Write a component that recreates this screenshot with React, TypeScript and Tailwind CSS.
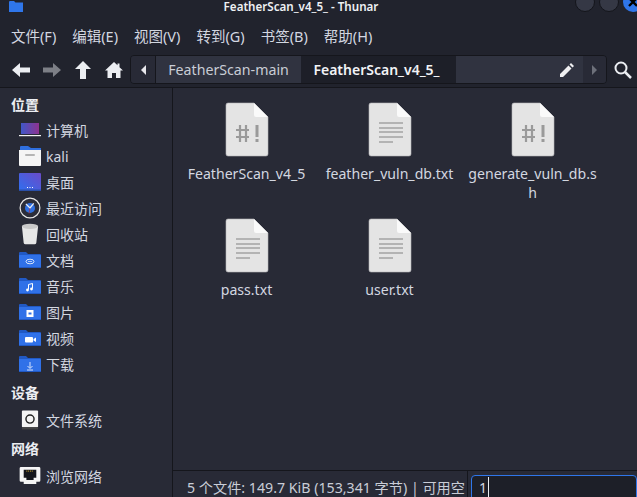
import React from 'react';

const Folder = ({ children }: { children?: React.ReactNode }) => (
  <svg width="22" height="16" viewBox="0 0 22 16">
    <path d="M0 1a1 1 0 0 1 1-1h6l2 2h12a1 1 0 0 1 1 1v2H0z" fill="#2159c4" />
    <rect x="0" y="3" width="22" height="13" rx="0.500" fill="#3071e8" />
    <rect x="0" y="15" width="22" height="1" fill="#2159c4" />
    {children}
  </svg>
);

const ScriptFile = () => (
  <svg width="44" height="55" viewBox="0 0 44 55">
    <path d="M3 1h26l14 14v37a2 2 0 0 1-2 2H3a2 2 0 0 1-2-2V3a2 2 0 0 1 2-2z" fill="#e4e4e4" stroke="#b5b5b8" strokeWidth="0.6" />
    <path d="M29 1l14 14H31a2 2 0 0 1-2-2z" fill="#fafafa" />
    <g stroke="#9a9a9a" strokeWidth="2.2" fill="none">
      <path d="M15 23v17M21 23v17M11 28h13M11 35h13" />
      <path d="M32 23v12M32 37v3" strokeWidth="3" />
    </g>
  </svg>
);

const TextFile = () => (
  <svg width="44" height="55" viewBox="0 0 44 55">
    <path d="M3 1h26l14 14v37a2 2 0 0 1-2 2H3a2 2 0 0 1-2-2V3a2 2 0 0 1 2-2z" fill="#e4e4e4" stroke="#b5b5b8" strokeWidth="0.6" />
    <path d="M29 1l14 14H31a2 2 0 0 1-2-2z" fill="#fafafa" />
    <path d="M11 21h24M11 26h24M11 30h24M11 35h24M11 40h14" stroke="#a2a2a2" strokeWidth="1.3" />
  </svg>
);

const places = [
  {
    label: '计算机',
    icon: (
      <svg width="22" height="14" viewBox="0 0 22 14">
        <defs>
          <linearGradient id="lap" x1="0" x2="1">
            <stop offset="0" stopColor="#3f57c8" />
            <stop offset="1" stopColor="#8e3390" />
          </linearGradient>
        </defs>
        <rect x="2" y="0" width="18" height="11" fill="url(#lap)" />
        <rect x="0" y="12" width="22" height="1.200" fill="#f2f2f2" />
      </svg>
    ),
  },
  {
    label: 'kali',
    icon: (
      <svg width="22" height="20" viewBox="0 0 22 20">
        <path d="M1 1a1 1 0 0 1 1-1h7l3 2h10v5H1z" fill="#2f6fe0" />
        <path d="M0 4h22v15a1 1 0 0 1-1 1H1a1 1 0 0 1-1-1z" fill="#f5f5f5" />
        <rect x="6" y="8" width="10" height="2" rx="1" fill="#b5b5b5" />
      </svg>
    ),
  },
  {
    label: '桌面',
    icon: (
      <svg width="22" height="18" viewBox="0 0 22 18">
        <defs>
          <linearGradient id="desk" x1="0" x2="1" y1="1" y2="0">
            <stop offset="0" stopColor="#2f6ff0" />
            <stop offset="1" stopColor="#6a4bc8" />
          </linearGradient>
        </defs>
        <rect x="0" y="0" width="22" height="18" rx="1" fill="url(#desk)" />
        <rect x="0" y="16.500" width="22" height="1.500" fill="#2a4fa8" />
        <path d="M8 14.500h1M10.500 14.500h1M13 14.500h1" stroke="#fff" strokeWidth="1" />
      </svg>
    ),
  },
  {
    label: '最近访问',
    icon: (
      <svg width="22" height="22" viewBox="0 0 24 24">
        <circle cx="12" cy="12" r="10.800" fill="#2b2d3a" stroke="#e6e6e6" strokeWidth="1.300" />
        <circle cx="12" cy="12" r="5.500" fill="#2f6fe0" />
        <path d="M7.500 7.500L12 12l4-5" stroke="#e8ecf5" strokeWidth="1.400" fill="none" />
        <path d="M12 12l-1 6" stroke="#b03040" strokeWidth="0.800" />
      </svg>
    ),
  },
  {
    label: '回收站',
    icon: (
      <svg width="18" height="22" viewBox="0 0 20 24">
        <path d="M1 3.500h18l-2 18.500a2 2 0 0 1-2 1.500H5a2 2 0 0 1-2-1.500z" fill="#e6e6e6" />
        <ellipse cx="10" cy="3.500" rx="9" ry="3" fill="#c9c9c9" />
      </svg>
    ),
  },
  {
    label: '文档',
    icon: (
      <Folder>
        <ellipse cx="11" cy="9.500" rx="4" ry="2.300" fill="none" stroke="#d5e2fb" strokeWidth="1" />
        <path d="M9 9.500h4" stroke="#d5e2fb" strokeWidth="0.800" />
      </Folder>
    ),
  },
  {
    label: '音乐',
    icon: (
      <Folder>
        <path d="M9.500 11.500V6.500l4-1V10.500" fill="none" stroke="#fff" strokeWidth="1" />
        <circle cx="8.500" cy="12" r="1.400" fill="#fff" />
        <circle cx="12.500" cy="11" r="1.400" fill="#fff" />
      </Folder>
    ),
  },
  {
    label: '图片',
    icon: (
      <Folder>
        <rect x="7.500" y="6" width="7" height="7" fill="#fff" />
        <rect x="9.500" y="8.500" width="3" height="2" fill="#3071e8" />
      </Folder>
    ),
  },
  {
    label: '视频',
    icon: (
      <Folder>
        <rect x="6" y="7" width="8" height="5.500" rx="1" fill="#fff" />
        <path d="M14.500 9l2.500-1.500v4.500L14.500 10.500z" fill="#fff" />
      </Folder>
    ),
  },
  {
    label: '下载',
    icon: (
      <Folder>
        <path d="M11 6v6M8.500 10l2.500 2.500 2.500-2.500M8 14h6" fill="none" stroke="#d5e2fb" strokeWidth="1" />
      </Folder>
    ),
  },
];

const files = [
  { name: 'FeatherScan_v4_5', script: true },
  { name: 'feather_vuln_db.txt', script: false },
  { name: 'generate_vuln_db.s h', script: true },
  { name: 'pass.txt', script: false },
  { name: 'user.txt', script: false },
];

const SideRow = ({ icon, label }: { icon: React.ReactNode; label: string }) => (
  <div className="flex h-[26px] items-center">
    <div className="flex w-[41px] shrink-0 justify-center pl-[19px]">{icon}</div>
    <span className="ml-[5px]">{label}</span>
  </div>
);

export default function App() {
  return (
    <div
      className="flex h-[497px] w-[637px] flex-col overflow-hidden bg-[#282a36] text-[14px] text-[#d3d7e0]"
      style={{ fontFamily: '"Noto Sans", "Noto Sans CJK SC", sans-serif' }}
    >
      {/* title bar */}
      <div className="flex h-[22px] shrink-0 items-start justify-between bg-[#21232d]">
        <svg className="ml-[9px] mt-px" width="14" height="11" viewBox="0 0 14 11">
          <path d="M0 1a1 1 0 0 1 1-1h4l1.500 1.500H14V11H0z" fill="#2f76ea" />
        </svg>
        <span className="ml-[4px] text-[11.600px] leading-[13px] font-semibold text-[#eef0f4]">
          FeatherScan_v4_5_ - Thunar
        </span>
        <div className="-mt-2 mr-[-1px] flex items-center gap-[4px]">
          <span className="h-[20px] w-[20px] rounded-full border border-[#14151b] bg-[#353845]" />
          <span className="h-[20px] w-[20px] rounded-full border border-[#14151b] bg-[#353845]" />
          <span className="mr-[-5px] flex h-[20px] w-[20px] items-center justify-center rounded-full bg-[#2f76ea]">
            <svg width="10" height="10" viewBox="0 0 10 10">
              <path d="M1 1l8 8M9 1l-8 8" stroke="#000" strokeWidth="2.400" />
            </svg>
          </span>
        </div>
      </div>

      {/* menu bar */}
      <div className="flex h-[30px] shrink-0 items-center gap-[16px] bg-[#21232d] pl-[11px] text-[14.500px]">
        <span>文件(F)</span>
        <span>编辑(E)</span>
        <span>视图(V)</span>
        <span>转到(G)</span>
        <span>书签(B)</span>
        <span>帮助(H)</span>
      </div>

      {/* toolbar */}
      <div className="flex h-[36px] shrink-0 items-center border-b border-[#15161c] bg-[#21232d] pl-[12px]">
        <svg width="18" height="14" viewBox="0 0 18 14">
          <path d="M8 0v4.500h10v5H8V14L0 7z" fill="#eceef2" />
        </svg>
        <svg className="ml-[13px]" width="18" height="14" viewBox="0 0 18 14">
          <path d="M10 0v4.500H0v5h10V14l8-7z" fill="#7d7f86" />
        </svg>
        <svg className="ml-[14px]" width="16" height="18" viewBox="0 0 16 18">
          <path d="M8 0l8 8h-5v10H5V8H0z" fill="#eceef2" />
        </svg>
        <svg className="ml-[14px]" width="18" height="16" viewBox="0 0 18 16">
          <path d="M9 0l3.500 3.300V1.500h2v3.700L18 8.500h-2.500V16H11v-5H7v5H2.500V8.500H0z" fill="#eceef2" />
        </svg>
        <div className="ml-[7px] flex h-[29px] w-[477px] overflow-hidden rounded-[4px] border border-[#15161c]">
          <div className="flex w-[25px] items-center justify-center border-r border-[#15161c] bg-[#282a36]">
            <span className="h-0 w-0 border-y-[5px] border-r-[5px] border-y-transparent border-r-[#e8e8ec]" />
          </div>
          <div className="flex w-[145px] items-center justify-center bg-[#303340] text-[14.200px] text-[#c9cdd6]">FeatherScan-main</div>
          <div className="flex w-[155px] items-center justify-center bg-[#1d1f28] pr-[4px] font-semibold text-[#f2f3f6]">
            FeatherScan_v4_5_
          </div>
          <div className="flex w-[127px] items-center justify-end bg-[#303340] pr-[9px]">
            <svg width="14" height="14" viewBox="0 0 14 14">
              <path d="M0 14v-3L8.500 2.500l3 3L3 14zM9.500 1.500L11 0l3 3-1.500 1.500z" fill="#f0f0f2" />
            </svg>
          </div>
          <div className="flex flex-1 items-center justify-center bg-[#282a36]">
            <span className="h-0 w-0 border-y-[5px] border-l-[5px] border-y-transparent border-l-[#6d707a]" />
          </div>
        </div>
        <svg className="ml-[7px]" width="18" height="18" viewBox="0 0 18 18" fill="none" stroke="#eceef2" strokeWidth="2">
          <circle cx="7" cy="7" r="5.500" />
          <path d="M11 11l6 6" strokeWidth="2.500" />
        </svg>
      </div>

      <div className="flex min-h-0 flex-1">
        {/* sidebar */}
        <div className="w-[173px] shrink-0 border-r border-[#15161c] pt-[3px]">
          <div className="flex h-[26px] items-center pl-[11px] font-semibold text-[#eceef2]">位置</div>
          {places.map((p) => (
            <SideRow key={p.label} icon={p.icon} label={p.label} />
          ))}
          <div className="mb-[2px] mt-[2px] flex h-[26px] items-center pl-[11px] font-semibold text-[#eceef2]">设备</div>
          <SideRow
            label="文件系统"
            icon={
              <svg width="18" height="22" viewBox="0 0 20 22">
                <rect x="1" y="0.500" width="18" height="18.500" rx="1" fill="#f5f5f5" />
                <rect x="1" y="19" width="18" height="2.500" fill="#444" />
                <circle cx="10" cy="10" r="4.500" fill="#f5f5f5" stroke="#222" strokeWidth="1.600" />
              </svg>
            }
          />
          <div className="flex h-[30px] items-center pl-[11px] font-semibold text-[#eceef2]">网络</div>
          <SideRow
            label="浏览网络"
            icon={
              <svg width="22" height="18" viewBox="0 0 24 20">
                <path d="M2 0h20a1.500 1.500 0 0 1 1.500 1.500V15a1.500 1.500 0 0 1-1.500 1.500h-3V19H5v-2.500H2A1.500 1.500 0 0 1 .5 15V1.500A1.500 1.500 0 0 1 2 0z" fill="#f5f5f5" />
                <path d="M5 3h14v9h-3v2.500H8V12H5z" fill="#14151b" />
                <path d="M8 4.500h8" stroke="#b9962e" strokeWidth="1.500" strokeDasharray="1 1" />
              </svg>
            }
          />
        </div>

        {/* main area */}
        <div className="flex min-w-0 flex-1 flex-col">
          <div className="grid flex-1 grid-cols-[143px_143px_143px] content-start pl-[2px] pt-[13px]">
            {files.map((f) => (
              <div key={f.name} className="flex h-[116px] flex-col items-center">
                <div className="mt-px">{f.script ? <ScriptFile /> : <TextFile />}</div>
                <span className="mt-[7px] w-[143px] break-words px-[6px] text-center text-[14.100px] leading-[19px] text-[#d3d7e0]">
                  {f.name}
                </span>
              </div>
            ))}
          </div>

          {/* status bar */}
          <div className="flex h-[27px] shrink-0 border-t border-[#15161c]">
            <div className="flex w-[294px] items-center overflow-hidden whitespace-nowrap pl-[14px] pt-[7px] text-[14.200px] text-[#c9cdd6]">
              5 个文件: 149.7 KiB (153,341 字节) | 可用空
            </div>
            <div className="flex-1 border-l border-[#15161c] pl-[3px] pt-[4px]">
              <div className="flex h-[26px] items-start rounded-t-[4px] border border-[#2f76ea] bg-[#1d1f28] pl-[7px] pt-[1px] text-[14px]">
                <span>1</span>
                <span className="ml-px h-[20px] w-px bg-[#eceef2]" />
              </div>
            </div>
          </div>
        </div>
      </div>
    </div>
  );
}
